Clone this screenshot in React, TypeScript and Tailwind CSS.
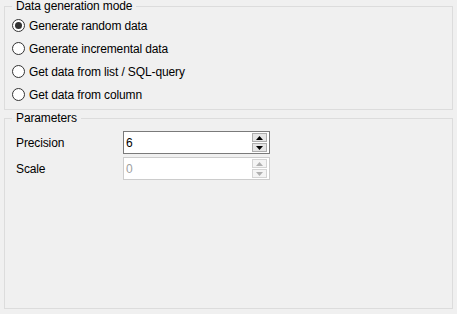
const font = { fontFamily: '"Liberation Sans", Arial, sans-serif' };

const modes = [
  "Generate random data",
  "Generate incremental data",
  "Get data from list / SQL-query",
  "Get data from column",
];

function Radio({ label, checked }: { label: string; checked?: boolean }) {
  return (
    <label className="flex h-[23px] items-center">
      <span className="ml-[7px] flex h-[13px] w-[13px] items-center justify-center rounded-full border border-[#333333] bg-white">
        {checked && <span className="h-[7px] w-[7px] rounded-full bg-[#333333]" />}
      </span>
      <span className="ml-[4px] text-[12px] tracking-[-0.12px] text-black">{label}</span>
    </label>
  );
}

function Arrow({ up, color }: { up?: boolean; color: string }) {
  return (
    <svg width="7" height="4" viewBox="0 0 7 4">
      <path d={up ? "M0 4 L3.5 0 L7 4 Z" : "M0 0 L7 0 L3.5 4 Z"} fill={color} />
    </svg>
  );
}

function SpinBox({ value, disabled }: { value: string; disabled?: boolean }) {
  const btn = disabled
    ? "border-[#d4d4d4] bg-[#f4f4f4]"
    : "border-[#adadad] bg-[#e5e5e5]";
  const arrow = disabled ? "#b0b0b0" : "#000000";
  return (
    <div
      className={`flex h-[23px] w-[147px] items-center border bg-white pl-[2px] pr-[2px] ${
        disabled ? "border-[#cccccc]" : "border-[#7a7a7a]"
      }`}
    >
      <span className={`flex-1 text-[12px] ${disabled ? "text-[#a0a0a0]" : "text-black"}`}>{value}</span>
      <div className="flex flex-col gap-[1px]">
        <div className={`flex h-[9px] w-[15px] items-center justify-center border ${btn}`}>
          <Arrow up color={arrow} />
        </div>
        <div className={`flex h-[9px] w-[15px] items-center justify-center border ${btn}`}>
          <Arrow color={arrow} />
        </div>
      </div>
    </div>
  );
}

export default function App() {
  return (
    <div className="h-[314px] w-[457px] overflow-hidden bg-[#f0f0f0]" style={font}>
      <fieldset className="mx-[4px] h-[110px] w-[449px] border border-[#dcdcdc] pb-[3px] pt-[1px]">
        <legend className="ml-[7px] px-[4px] text-[12px] leading-[13px] tracking-[-0.12px] text-black">
          Data generation mode
        </legend>
        {modes.map((m, i) => (
          <Radio key={m} label={m} checked={i === 0} />
        ))}
      </fieldset>
      <fieldset className="mx-[4px] mt-[2px] h-[197px] w-[449px] border border-[#dcdcdc] pl-[11px] pt-[6px]">
        <legend className="-ml-[4px] px-[4px] text-[12px] leading-[13px] tracking-[-0.12px] text-black">
          Parameters
        </legend>
        <div className="flex flex-col gap-[3px]">
          <div className="flex items-center">
            <span className="w-[107px] text-[12px] tracking-[-0.12px] text-black">Precision</span>
            <SpinBox value="6" />
          </div>
          <div className="flex items-center">
            <span className="w-[107px] text-[12px] tracking-[-0.12px] text-black">Scale</span>
            <SpinBox value="0" disabled />
          </div>
        </div>
      </fieldset>
    </div>
  );
}
